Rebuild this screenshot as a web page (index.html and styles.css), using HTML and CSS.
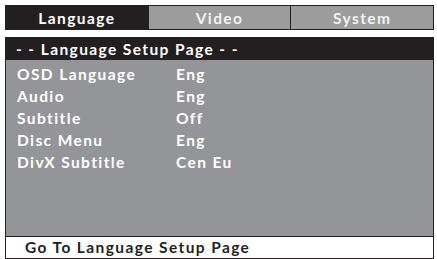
FILE: index.html
```html
<!DOCTYPE html>
<html>
<head>
    <link rel="stylesheet" href="styles.css">
</head>
<body>
    <div class="tabs">
        <div class="tab active">Language</div>
        <div class="tab">Video</div>
        <div class="tab">System</div>
    </div>

    <div class="panel">
        <div class="panel-title">- - Language Setup Page - -</div>
        <div class="settings">
            <div class="row"><span class="label">OSD Language</span><span class="value">Eng</span></div>
            <div class="row"><span class="label">Audio</span><span class="value">Eng</span></div>
            <div class="row"><span class="label">Subtitle</span><span class="value">Off</span></div>
            <div class="row"><span class="label">Disc Menu</span><span class="value">Eng</span></div>
            <div class="row"><span class="label">DivX Subtitle</span><span class="value">Cen Eu</span></div>
        </div>
        <div class="status">Go To Language Setup Page</div>
    </div>
</body>
</html>
```

FILE: styles.css
```css
body {
    margin: 0;
    padding: 5px 3px 0 5px;
    background: #fff;
    font-family: Lato, "Liberation Sans", sans-serif;
    font-weight: bold;
    font-size: 15.5px;
    letter-spacing: 1.4px;
}

.tabs {
    display: flex;
    height: 23px;
    border: 1px solid #231f20;
}

.tab {
    flex: 1;
    display: flex;
    align-items: center;
    justify-content: center;
    background: #9b9c9e;
    color: #f2f2f2;
    border-left: 1.5px solid #231f20;
}

.tab:first-child {
    border-left: none;
}

.tab.active {
    background: #231f20;
    color: #fff;
}

.panel {
    margin-top: 7px;
    border: 1px solid #231f20;
    height: 220px;
    display: flex;
    flex-direction: column;
}

.panel-title {
    height: 22px;
    line-height: 22px;
    background: #231f20;
    color: #fff;
    padding-left: 10px;
}

.settings {
    flex: 1;
    background: #939598;
    color: #fff;
    padding: 3px 0 0 11px;
    border-bottom: 1.5px solid #231f20;
}

.row {
    display: flex;
    height: 22px;
    align-items: center;
}

.label {
    width: 159px;
}

.status {
    height: 21px;
    line-height: 21px;
    padding-left: 19px;
    color: #231f20;
}
```
